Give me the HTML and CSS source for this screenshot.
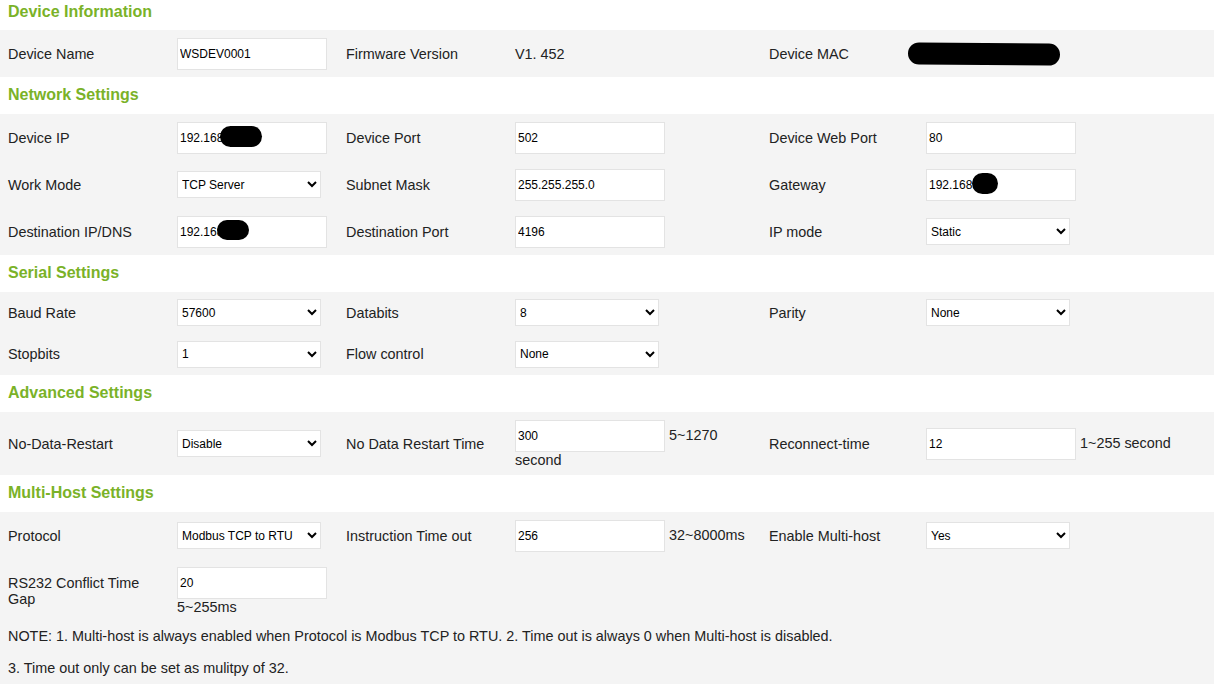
FILE: index.html
```html
<!DOCTYPE html>
<html lang="en">
<head>
  <meta charset="UTF-8">
  <title>Device Settings</title>
  <link rel="stylesheet" href="styles.css">
</head>
<body>

<form class="settings">

  <h2 class="section-title first">Device Information</h2>
  <div class="fields">
    <label class="cell">Device Name</label>
    <div class="cell"><input class="text" type="text" value="WSDEV0001"></div>
    <label class="cell">Firmware Version</label>
    <div class="cell">V1. 452</div>
    <label class="cell">Device MAC</label>
    <div class="cell"><span class="mac-blot"></span></div>
  </div>

  <h2 class="section-title">Network Settings</h2>
  <div class="fields">
    <label class="cell">Device IP</label>
    <div class="cell"><span class="masked"><input class="text" type="text" value="192.168"><i class="blot blot-ip"></i></span></div>
    <label class="cell">Device Port</label>
    <div class="cell"><input class="text" type="text" value="502"></div>
    <label class="cell">Device Web Port</label>
    <div class="cell"><input class="text" type="text" value="80"></div>

    <label class="cell">Work Mode</label>
    <div class="cell">
      <select><option>TCP Server</option><option>TCP Client</option><option>UDP</option></select>
    </div>
    <label class="cell">Subnet Mask</label>
    <div class="cell"><input class="text" type="text" value="255.255.255.0"></div>
    <label class="cell">Gateway</label>
    <div class="cell"><span class="masked"><input class="text" type="text" value="192.168"><i class="blot blot-gw"></i></span></div>

    <label class="cell">Destination IP/DNS</label>
    <div class="cell"><span class="masked"><input class="text" type="text" value="192.168"><i class="blot blot-dest"></i></span></div>
    <label class="cell">Destination Port</label>
    <div class="cell"><input class="text" type="text" value="4196"></div>
    <label class="cell">IP mode</label>
    <div class="cell">
      <select><option>Static</option><option>DHCP</option></select>
    </div>
  </div>

  <h2 class="section-title">Serial Settings</h2>
  <div class="fields compact">
    <label class="cell">Baud Rate</label>
    <div class="cell">
      <select><option>57600</option><option>9600</option><option>115200</option></select>
    </div>
    <label class="cell">Databits</label>
    <div class="cell">
      <select><option>8</option><option>7</option></select>
    </div>
    <label class="cell">Parity</label>
    <div class="cell">
      <select><option>None</option><option>Odd</option><option>Even</option></select>
    </div>

    <label class="cell">Stopbits</label>
    <div class="cell">
      <select><option>1</option><option>2</option></select>
    </div>
    <label class="cell">Flow control</label>
    <div class="cell">
      <select><option>None</option><option>RTS/CTS</option></select>
    </div>
    <div class="cell"></div>
    <div class="cell"></div>
  </div>

  <h2 class="section-title">Advanced Settings</h2>
  <div class="fields">
    <label class="cell">No-Data-Restart</label>
    <div class="cell">
      <select><option>Disable</option><option>Enable</option></select>
    </div>
    <label class="cell">No Data Restart Time</label>
    <div class="cell"><input class="text" type="text" value="300"> 5~1270 second</div>
    <label class="cell">Reconnect-time</label>
    <div class="cell"><input class="text" type="text" value="12"> 1~255 second</div>
  </div>

  <h2 class="section-title">Multi-Host Settings</h2>
  <div class="fields">
    <label class="cell">Protocol</label>
    <div class="cell">
      <select><option>Modbus TCP to RTU</option><option>None</option></select>
    </div>
    <label class="cell">Instruction Time out</label>
    <div class="cell"><input class="text" type="text" value="256"> 32~8000ms</div>
    <label class="cell">Enable Multi-host</label>
    <div class="cell">
      <select><option>Yes</option><option>No</option></select>
    </div>

    <label class="cell">RS232 Conflict Time Gap</label>
    <div class="cell"><input class="text" type="text" value="20"> 5~255ms</div>

    <div class="notes">
      <p>NOTE: 1. Multi-host is always enabled when Protocol is Modbus TCP to RTU. 2. Time out is always 0 when Multi-host is disabled.</p>
      <p>3. Time out only can be set as mulitpy of 32.</p>
    </div>
  </div>

</form>

</body>
</html>
```

FILE: styles.css
```css
body {
  margin: 0;
  font-family: "Liberation Sans", Arial, sans-serif;
  font-size: 14.4px;
  color: #222;
  background: #fff;
}

.section-title {
  margin: 0;
  padding: 9px 8px 10px;
  line-height: 18px;
  font-size: 16px; font-weight: bold;
  color: #7ab228;
}
.section-title.first { padding-top: 3px; padding-bottom: 9px; }

.fields {
  display: grid;
  grid-template-columns: 169px 169px 169px 254px 157px 1fr;
  align-items: center;
  background: #f4f4f4;
}
.cell { padding: 7.5px 8px; }
.fields.compact .cell { padding: 7.25px 8px; }

input.text {
  box-sizing: border-box;
  width: 150px; height: 32px;
  padding: 1px 2px;
  border: 1px solid #e3e3e3;
  background: #fff; color: #000;
  font-family: "Liberation Sans", Arial, sans-serif;
  font-size: 12px;
  vertical-align: baseline;
  outline: none;
}

select {
  box-sizing: border-box;
  width: 144px; height: 27px;
  padding: 0;
  border: 1px solid #e3e3e3;
  border-radius: 0;
  background: #fff; color: #000;
  font-family: "Liberation Sans", Arial, sans-serif;
  font-size: 12px;
  vertical-align: middle;
}

/* hidden address parts */
.masked { position: relative; display: inline-block; }
.blot {
  position: absolute; top: 4px;
  height: 21px;
  background: #000;
  border-radius: 11px;
}
.blot-ip { left: 43px; width: 42px; }
.blot-gw { left: 46px; width: 26px; }
.blot-dest { left: 40px; width: 32px; height: 20px; }

.mac-blot {
  display: inline-block;
  vertical-align: middle;
  width: 152px; height: 22px;
  margin-left: -18px;
  background: #000;
  border-radius: 11px;
  transform: rotate(0.5deg);
}

.notes { grid-column: 1 / -1; padding: 6px 8px 1px; }
.notes p { margin: 0 0 16px; line-height: 16px; }
.notes p:last-child { margin-bottom: 8px; }
```
